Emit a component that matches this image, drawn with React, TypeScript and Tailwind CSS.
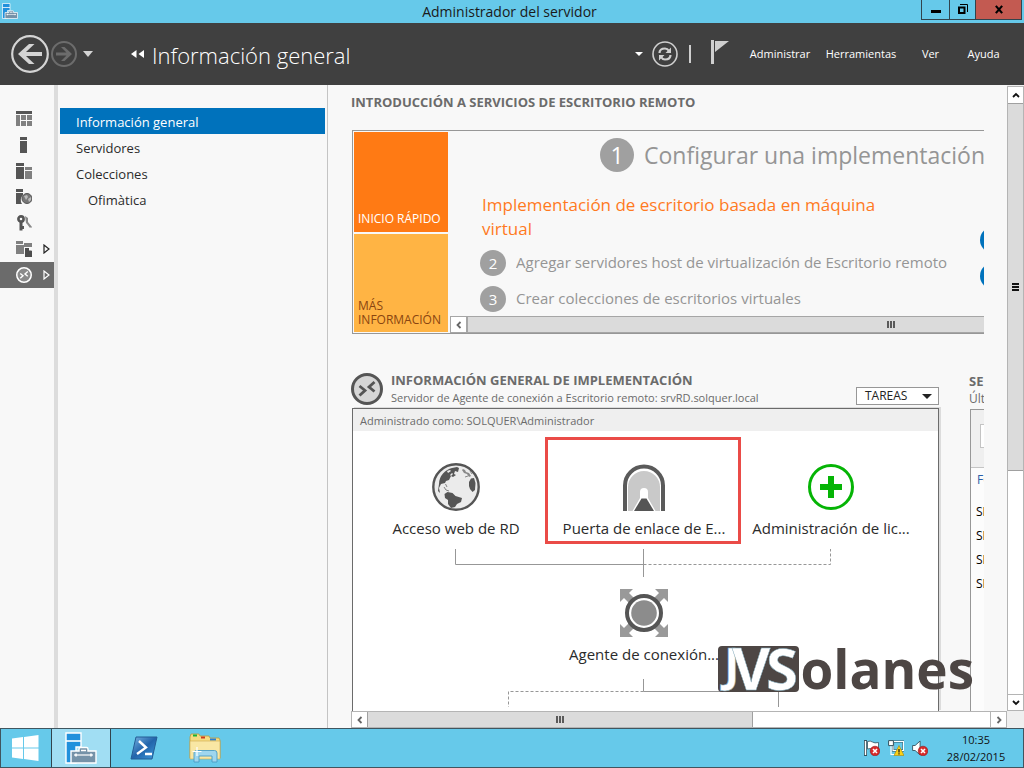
import type { ReactNode } from "react";
import clsx from "clsx";

type IconProps = { className?: string };

function ServerManagerIcon({ className }: IconProps) {
    return (
        <svg viewBox="0 0 32 32" className={className} aria-hidden="true">
            <path d="M1 1h15v14h-5v16H1z" fill="#2090dc" stroke="#fff" strokeWidth="1.4" />
            <path d="M1 9h15" stroke="#fff" strokeWidth="1.6" />
            <path
                d="M6 19h8v-2q0-1.5 1.500-1.500h6q1.500 0 1.500 1.500v2h8v12H6z"
                fill="#7592a8"
                stroke="#fff"
                strokeWidth="1.4"
            />
            <path d="M9 23h19" stroke="#fff" strokeWidth="1.2" />
            <path d="M11 21.500v3M26 21.500v3M16 18.500h5" stroke="#fff" strokeWidth="1.6" />
        </svg>
    );
}

function RemoteIcon({ className, fill, ring, mark }: IconProps & { fill: string; ring: string; mark: string }) {
    return (
        <svg viewBox="0 0 32 32" className={className} aria-hidden="true">
            <circle cx="16" cy="16" r="14.500" fill={fill} stroke={ring} strokeWidth="3" />
            <path d="M8.500 13l5.500 4.500-5.500 5" fill="none" stroke={mark} strokeWidth="2.800" />
            <path d="M23.500 9l-5.500 5 5.500 4.500" fill="none" stroke={mark} strokeWidth="2.800" />
        </svg>
    );
}

function Chevron({ d, className }: IconProps & { d: string }) {
    return (
        <svg viewBox="0 0 10 10" className={clsx("h-[10px] w-[10px]", className)} aria-hidden="true">
            <path d={d} fill="none" stroke="currentColor" strokeWidth="1.800" />
        </svg>
    );
}

const railIcons: { label: string; icon: ReactNode; arrow?: boolean; active?: boolean }[] = [
    {
        label: "Panel",
        icon: (
            <>
                <path d="M0 0h16v3H0z" fill="#555" />
                <path d="M0 4h4v11H0zM5 4h5v5H5zM11 4h5v5h-5zM5 10h5v5H5zM11 10h5v5h-5z" fill="#808080" />
            </>
        ),
    },
    {
        label: "Servidor local",
        icon: <path d="M4 0h7v3H4zM4 4h7v12H4z" fill="#555" />,
    },
    {
        label: "Todos los servidores",
        icon: (
            <>
                <path d="M0 0h8v3H0zM0 4h8v12H0z" fill="#555" />
                <path d="M9 4h7v3H9zM9 8h7v8H9z" fill="#808080" />
            </>
        ),
    },
    {
        label: "Servicios de archivos",
        icon: (
            <>
                <path d="M0 0h7v3H0zM0 4h7v2q-4 4-1 9H0z" fill="#555" />
                <circle cx="11" cy="9.500" r="5" fill="#777" stroke="#555" />
                <path d="M8 7l3-1 1 2-2 3zM12 10l3-2v3l-2 2z" fill="#bbb" />
            </>
        ),
    },
    {
        label: "Acceso",
        icon: (
            <>
                <circle cx="5" cy="4" r="2.600" fill="none" stroke="#555" strokeWidth="2.600" />
                <path d="M3.500 7h3v8.500h-3zM6 11h2v3H6z" fill="#555" />
                <path d="M9 1l3 2v4l4 5-1 1-5-5zM11 9l3 1v3z" fill="#888" />
            </>
        ),
    },
    {
        label: "Archivos y almacenamiento",
        arrow: true,
        icon: (
            <>
                <path d="M0 0h7v3H0zM0 4h8v9H0zM8 2h8v4H8z" fill="#808080" />
                <path d="M9 7h4l3 3v6H9z" fill="#4d4d4d" />
                <path d="M13 6l3 3.500h-3z" fill="#fff" />
            </>
        ),
    },
    { label: "Servicios de Escritorio remoto", arrow: true, active: true, icon: null },
];

const navItems = [
    { label: "Información general", active: true },
    { label: "Servidores" },
    { label: "Colecciones" },
    { label: "Ofimàtica", nested: true },
];

function TitleBar() {
    return (
        <header className="flex h-[23px] shrink-0 items-start bg-[#66c9ea]">
            <ServerManagerIcon className="ml-[2px] mt-[3px] h-4 w-4" />
            <h1 className="flex-1 pl-20 text-center text-[14px] leading-[23px] text-[#1a1a1a]">
                Administrador del servidor
            </h1>
            <div className="mr-[2px] flex h-5 border border-t-0 border-[#31444d] text-black">
                <button aria-label="Minimizar" className="flex w-[27px] items-end justify-center pb-[6px]">
                    <span className="h-[3px] w-[10px] bg-black" />
                </button>
                <button
                    aria-label="Restaurar"
                    className="flex w-[27px] items-center justify-center border-x border-[#31444d] pb-[2px]"
                >
                    <svg viewBox="0 0 10 10" className="h-[10px] w-[10px]" aria-hidden="true">
                        <path d="M1 3.500h5.500V9H1z" fill="none" stroke="#000" strokeWidth="2" />
                        <path d="M2 .5h7.500V8" fill="none" stroke="#000" />
                    </svg>
                </button>
                <button
                    aria-label="Cerrar"
                    className="flex w-[45px] items-center justify-center bg-[#c35a51] pb-px"
                >
                    <svg viewBox="0 0 10 10" className="h-[9px] w-[10px]" aria-hidden="true">
                        <path d="M1.500 1l7 8M8.500 1l-7 8" stroke="#000" strokeWidth="2.400" />
                    </svg>
                </button>
            </div>
        </header>
    );
}

function Toolbar() {
    return (
        <div className="flex h-[62px] shrink-0 items-center bg-[#404040] pl-[11px] pr-[23px] text-white">
            <button aria-label="Atrás">
                <svg viewBox="0 0 38 38" className="h-[38px] w-[38px]" aria-hidden="true">
                    <circle cx="19" cy="19" r="17.800" fill="none" stroke="#d4d4d4" strokeWidth="2.200" />
                    <path d="M7 19L18 9h5.500l-8.500 8h16v4H15l8.500 8H18z" fill="#d4d4d4" />
                </svg>
            </button>
            <button aria-label="Adelante" className="ml-[2px]">
                <svg viewBox="0 0 26 26" className="h-[26px] w-[26px]" aria-hidden="true">
                    <circle cx="13" cy="13" r="12" fill="none" stroke="#6c6c6c" strokeWidth="2" />
                    <path d="M21 13l-7.500-7H10l5.500 5.500H5v3h10.500L10 20h3.500z" fill="#6c6c6c" />
                </svg>
            </button>
            <button aria-label="Historial" className="ml-[6px]">
                <svg viewBox="0 0 10 6" className="h-[6px] w-[10px]" aria-hidden="true">
                    <path d="M0 0h10L5 6z" fill="#d4d4d4" />
                </svg>
            </button>
            <svg viewBox="0 0 14 8" className="ml-[38px] h-2 w-[14px]" aria-hidden="true">
                <path d="M5.500 0v8L0 4zM13 0v8L7.500 4z" fill="#fff" />
            </svg>
            <h2 className="ml-[7px] flex-1 whitespace-nowrap pt-[2px] text-[22px] font-light leading-8">
                Información general
            </h2>
            <button aria-label="Más" className="ml-2">
                <svg viewBox="0 0 8 4" className="h-1 w-2" aria-hidden="true">
                    <path d="M0 0h8L4 4z" fill="#fff" />
                </svg>
            </button>
            <button aria-label="Actualizar" className="ml-[9px]">
                <svg viewBox="0 0 26 26" className="h-[26px] w-[26px]" aria-hidden="true">
                    <circle cx="13" cy="13" r="12" fill="none" stroke="#cfcfcf" strokeWidth="1.600" />
                    <path
                        d="M7.500 12q0-4.500 5.500-4.500 2.500 0 4 2.500M18.500 14q0 4.500-5.500 4.500-2.500 0-4-2.500"
                        fill="none"
                        stroke="#cfcfcf"
                        strokeWidth="2.200"
                    />
                    <path d="M19 6.500V12h-5.500zM7 19.500V14h5.500z" fill="#cfcfcf" />
                </svg>
            </button>
            <span className="ml-[11px] h-[18px] w-[2px] bg-[#cfcfcf]" />
            <button aria-label="Notificaciones" className="ml-5 pb-1">
                <svg viewBox="0 0 18 24" className="h-6 w-[18px]" aria-hidden="true">
                    <path d="M0 0h3v24H0zM4 1h14L4 12z" fill="#cfcfcf" />
                </svg>
            </button>
            <nav className="flex items-center pt-px text-[11px]">
                <button className="ml-5 w-[62px] whitespace-nowrap">Administrar</button>
                <button className="ml-[14px] w-[72px] whitespace-nowrap">Herramientas</button>
                <button className="ml-6 w-[19px] whitespace-nowrap">Ver</button>
                <button className="ml-[26px] w-[35px] whitespace-nowrap">Ayuda</button>
            </nav>
        </div>
    );
}

function Rail() {
    return (
        <nav className="w-[54px] shrink-0 pt-[21px]">
            {railIcons.map((item) => (
                <a
                    key={item.label}
                    href="#"
                    aria-label={item.label}
                    className={clsx(
                        "flex h-[26px] items-center gap-[11px] pl-4",
                        item.active ? "bg-[#6b6b6b] text-white" : "text-[#222]",
                    )}
                >
                    {item.icon ? (
                        <svg viewBox="0 0 16 16" className="h-4 w-4" aria-hidden="true">
                            {item.icon}
                        </svg>
                    ) : (
                        <RemoteIcon className="h-4 w-4" fill="#8a8a8a" ring="#fff" mark="#fff" />
                    )}
                    {item.arrow && (
                        <svg viewBox="0 0 7 10" className="h-[10px] w-[7px]" aria-hidden="true">
                            <path d="M1 1v8l5-4z" fill="none" stroke="currentColor" strokeWidth="1.200" />
                        </svg>
                    )}
                </a>
            ))}
        </nav>
    );
}

function SideNav() {
    return (
        <nav className="w-[274px] shrink-0 border-l-4 border-r border-l-[#dcdcdc] border-r-[#c4c4c4] px-[2px] pt-[23px] text-[13px] text-[#2b2b2b]">
            {navItems.map((item) => (
                <a
                    key={item.label}
                    href="#"
                    className={clsx(
                        "flex h-[26px] items-center pt-1",
                        item.nested ? "pl-7" : "pl-4",
                        item.active && "bg-[#0072bc] text-white",
                    )}
                >
                    {item.label}
                </a>
            ))}
        </nav>
    );
}

function Step({ n, blue, children }: { n: string; blue?: boolean; children?: ReactNode }) {
    return (
        <li className="flex h-[26px] items-center gap-[10px]">
            <span
                className={clsx(
                    "flex h-[26px] w-[26px] shrink-0 items-center justify-center rounded-full text-white",
                    blue ? "bg-[#0072bc]" : "bg-[#a0a0a0]",
                )}
            >
                {n}
            </span>
            <span className="overflow-hidden whitespace-nowrap pb-[2px]">{children}</span>
        </li>
    );
}

function Intro() {
    return (
        <section>
            <h3 className="whitespace-nowrap text-[13px] font-bold leading-4 text-[#6b6b6b]">
                INTRODUCCIÓN A SERVICIOS DE ESCRITORIO REMOTO
            </h3>
            <div className="ml-px mt-5 flex h-[204px] border border-r-0 border-[#979797]">
                <div className="flex w-[96px] shrink-0 flex-col gap-[2px] p-px text-[12px] leading-[14px]">
                    <button className="flex flex-1 items-end bg-[#ff7a14] px-1 pb-[6px] text-left text-white">
                        INICIO RÁPIDO
                    </button>
                    <button className="flex flex-1 items-end bg-[#ffb444] px-1 pb-[5px] text-left text-[#8a4510]">
                        MÁS INFORMACIÓN
                    </button>
                </div>
                <div className="flex min-w-0 flex-1 flex-col justify-between overflow-hidden pl-px">
                    <div className="flex">
                        <div className="w-[530px] shrink-0 pl-[30px] pt-[7px] text-[#959595]">
                            <div className="flex h-[34px] items-center gap-[10px] pl-[120px] text-[23px]">
                                <span className="flex h-[34px] w-[34px] shrink-0 items-center justify-center rounded-full bg-[#a0a0a0] text-white">
                                    1
                                </span>
                                <span className="whitespace-nowrap">Configurar una implementación</span>
                            </div>
                            <h4 className="mt-[21px] w-[420px] pl-[2px] text-[17px] leading-6 text-[#ff7a1e]">
                                Implementación de escritorio basada en máquina virtual
                            </h4>
                            <ol className="mt-[9px] flex w-[471px] flex-col gap-[10px] text-[15px]">
                                <Step n="2">Agregar servidores host de virtualización de Escritorio remoto</Step>
                                <Step n="3">Crear colecciones de escritorios virtuales</Step>
                            </ol>
                        </div>
                        <ol className="flex shrink-0 flex-col gap-[10px] pt-24 text-[15px]">
                            <Step n="" blue />
                            <Step n="" blue />
                        </ol>
                    </div>
                    <div className="flex h-[17px] shrink-0 border border-r-0 border-[#a6a6a6] text-[#666]">
                        <button
                            aria-label="Desplazar a la izquierda"
                            className="flex w-[15px] items-center justify-center bg-white"
                        >
                            <Chevron d="M6.500 2l-3 3 3 3" />
                        </button>
                        <div className="flex flex-1 items-center justify-end gap-px border-l-2 border-[#a6a6a6] bg-[#dbdbdb] pr-[89px]">
                            <Grip />
                        </div>
                    </div>
                </div>
            </div>
        </section>
    );
}

function Grip() {
    return (
        <>
            <span className="h-[7px] w-[2px] bg-[#5a5a5a]" />
            <span className="h-[7px] w-[2px] bg-[#5a5a5a]" />
            <span className="h-[7px] w-[2px] bg-[#5a5a5a]" />
        </>
    );
}

function WebAccessIcon() {
    return (
        <svg viewBox="0 0 48 48" className="h-12 w-12" aria-hidden="true">
            <circle cx="24" cy="24" r="22.700" fill="#ebebeb" stroke="#555" strokeWidth="2.400" />
            <path
                d="M7 21q0-6 4-10.500Q15 6 20 5l5-1 2 1-1 4-3-1-1 3 2 1-3 2-2-1-2 4-3 1-1 2-4 1-2 4 1 5-2-2z"
                fill="#555"
            />
            <path d="M12 24l2 3 3 1M13.500 21l1.500 3" fill="none" stroke="#777" strokeWidth=".9" />
            <path d="M15 8l3-1 1 1-3 2zM18 12l2-2 1 1-2 2z" fill="#ebebeb" />
            <path d="M12.500 31l3-2 5 1 3 3 6.500 2-1 4-4 2-2 3-4 1-3-4v-4l-3-2z" fill="#555" />
            <path d="M37 19l2-3.500 3-.5 1.500 5-.5 7-2.500 2-2.500-3-1-3z" fill="#555" />
            <path d="M31 6l2 1 1 2 3 1 2 3-2 1-2-3-3-1-2-3z" fill="#888" />
            <path d="M33 14l3-1M38 8l2 3" stroke="#888" />
        </svg>
    );
}

function GatewayIcon() {
    return (
        <svg viewBox="0 0 48 48" className="h-12 w-12" aria-hidden="true">
            <path d="M5 48V22.500a19 19 0 0 1 38 0V48" fill="none" stroke="#5a5a5a" strokeWidth="4" />
            <path d="M8 48V24a16 16 0 0 1 32 0v24z" fill="#c9c9c9" />
            <path d="M12.500 48L20 35v-6a4 4 0 0 1 8 0v6l7.500 13z" fill="#fff" />
            <path d="M14 48l7.500-12.500h5L34 48z" fill="#555" />
        </svg>
    );
}

function LicenseIcon() {
    return (
        <svg viewBox="0 0 48 48" className="h-12 w-12" aria-hidden="true">
            <circle cx="24" cy="24" r="21.500" fill="#fff" stroke="#05b405" strokeWidth="3" />
            <path d="M13 21h8v-8h6v8h8v6h-8v8h-6v-8h-8z" fill="#05b405" />
        </svg>
    );
}

function BrokerIcon() {
    return (
        <svg viewBox="0 0 48 48" className="h-12 w-12" aria-hidden="true">
            <path d="M0 0h13L9 4l8 8-5 5-8-8-4 4z" fill="#999" />
            <path d="M48 0H35l4 4-8 8 5 5 8-8 4 4z" fill="#999" />
            <path d="M0 48h13l-4-4 8-8-5-5-8 8-4-4z" fill="#999" />
            <path d="M48 48H35l4-4-8-8 5-5 8 8 4-4z" fill="#999" />
            <circle cx="24" cy="24" r="17" fill="#fff" stroke="#555" strokeWidth="4" />
            <circle cx="24" cy="24" r="12.800" fill="#8c8c8c" />
        </svg>
    );
}

const nodes = [
    { label: "Acceso web de RD", icon: <WebAccessIcon />, place: "left-[3px] top-8" },
    { label: "Puerta de enlace de E...", icon: <GatewayIcon />, place: "left-[191px] top-8" },
    { label: "Administración de lic...", icon: <LicenseIcon />, place: "left-[378px] top-8" },
    { label: "Agente de conexión...", icon: <BrokerIcon />, place: "left-[191px] top-[158px]" },
];

function Diagram() {
    return (
        <div className="relative flex-1 overflow-hidden bg-white text-[15px] text-[#2b2b2b]">
            <svg className="absolute left-0 top-0 h-[280px] w-[586px]" viewBox="0 0 586 280" aria-hidden="true">
                <path
                    d="M102.500 118v15.500h188M290.500 118v28M290.500 248v12.500h135V276"
                    fill="none"
                    stroke="#979797"
                />
                <path
                    d="M290.500 133.500h187V118M290.500 260.500h-135V276"
                    fill="none"
                    stroke="#979797"
                    strokeDasharray="3 2"
                />
            </svg>
            {nodes.map((node) => (
                <div key={node.label} className={clsx("absolute flex w-[200px] flex-col items-center", node.place)}>
                    {node.icon}
                    <span className="mt-[5px] whitespace-nowrap leading-6">{node.label}</span>
                </div>
            ))}
            <div className="absolute left-[192px] top-[6px] h-[107px] w-[196px] border-3 border-[#ea4b47]" />
        </div>
    );
}

function Deployment() {
    return (
        <section className="flex w-[588px] shrink-0 flex-col">
            <div className="flex h-[35px] items-start gap-2">
                <RemoteIcon className="h-8 w-8 shrink-0" fill="#d6d6d6" ring="#555" mark="#555" />
                <div className="flex-1 whitespace-nowrap text-[#6b6b6b]">
                    <h3 className="text-[13px] font-bold leading-[14px]">INFORMACIÓN GENERAL DE IMPLEMENTACIÓN</h3>
                    <p className="text-[11px] leading-[22px]">
                        Servidor de Agente de conexión a Escritorio remoto: srvRD.solquer.local
                    </p>
                </div>
                <button className="mt-[14px] flex h-[18px] w-[83px] items-center justify-between border border-[#979797] bg-white pl-2 pr-[6px] text-[12px] text-[#222]">
                    TAREAS
                    <svg viewBox="0 0 10 5" className="h-[5px] w-[10px]" aria-hidden="true">
                        <path d="M0 0h10L5 5z" fill="#222" />
                    </svg>
                </button>
            </div>
            <div className="ml-px flex flex-1 flex-col border border-b-0 border-[#6b6b6b] shadow-[2px_-1px_0_#dcdcdc]">
                <p className="h-[22px] bg-[#efefef] pl-[7px] text-[11px] leading-6 text-[#6b6b6b]">
                    Administrado como: SOLQUER\Administrador
                </p>
                <Diagram />
            </div>
        </section>
    );
}

function ServerList() {
    return (
        <section className="flex w-[300px] shrink-0 flex-col text-[12px]">
            <div className="h-9 whitespace-nowrap text-[#6b6b6b]">
                <h3 className="text-[13px] font-bold leading-[17px]">SE</h3>
                <p className="leading-[18px]">Últ</p>
            </div>
            <div className="ml-px flex-1 border-l border-t border-[#979797] bg-[#fcfcfc]">
                <div className="h-[58px] border-b border-[#c4c4c4] bg-[#efefef] pl-[9px] pt-[14px]">
                    <input
                        aria-label="Filtro"
                        className="h-6 w-[160px] border border-[#c4c4c4] bg-white outline-none"
                    />
                </div>
                <table className="w-full text-left text-black">
                    <thead>
                        <tr className="h-8 text-[#2b5fa8]">
                            <th className="pb-2 pl-[6px] font-normal">FQ</th>
                        </tr>
                    </thead>
                    <tbody>
                        {["a", "b", "c", "d"].map((row) => (
                            <tr key={row} className="h-6">
                                <td className="pl-[5px]">SE</td>
                            </tr>
                        ))}
                    </tbody>
                </table>
            </div>
        </section>
    );
}

function Main() {
    return (
        <main className="flex min-w-0 flex-1">
            <div className="flex min-w-0 flex-1 flex-col">
                <div className="mx-[23px] flex min-h-0 flex-1 flex-col overflow-hidden pt-[9px]">
                    <Intro />
                    <div className="mt-[39px] flex flex-1 gap-[30px]">
                        <Deployment />
                        <ServerList />
                    </div>
                </div>
                <div className="ml-[23px] flex h-[17px] shrink-0 border border-[#b4b4b4] bg-white text-[#666]">
                    <button aria-label="Desplazar a la izquierda" className="flex w-[15px] items-center justify-center">
                        <Chevron d="M6.500 2l-3 3 3 3" />
                    </button>
                    <div className="flex w-[59%] items-center justify-center gap-px border border-y-0 border-[#a0a0a0] bg-[#dbdbdb]">
                        <Grip />
                    </div>
                    <button
                        aria-label="Desplazar a la derecha"
                        className="ml-auto flex w-4 items-center justify-center border-l border-[#b4b4b4]"
                    >
                        <Chevron d="M3.500 2l3 3-3 3" />
                    </button>
                </div>
            </div>
            <div className="flex w-[17px] shrink-0 flex-col bg-[#efefef] pb-[17px] pt-px text-[#111]">
                <div className="flex flex-1 flex-col border border-[#b4b4b4] bg-white">
                    <button aria-label="Desplazar hacia arriba" className="flex h-4 items-center justify-center">
                        <Chevron d="M2 7l3-3 3 3" />
                    </button>
                    <div className="flex h-[59%] flex-col items-center justify-center gap-px border-y border-[#a0a0a0] bg-[#dbdbdb]">
                        <span className="h-[2px] w-[7px] bg-[#111]" />
                        <span className="h-[2px] w-[7px] bg-[#111]" />
                        <span className="h-[2px] w-[7px] bg-[#111]" />
                    </div>
                    <button
                        aria-label="Desplazar hacia abajo"
                        className="mt-auto flex h-4 items-center justify-center border-t border-[#b4b4b4]"
                    >
                        <Chevron d="M2 3l3 3 3-3" />
                    </button>
                </div>
            </div>
        </main>
    );
}

function Badge({ x, y }: { x: number; y: number }) {
    return (
        <g transform={`translate(${x} ${y})`}>
            <circle r="4.800" fill="#d92a2a" stroke="#8f1a1a" strokeWidth=".6" />
            <path d="M-2-2l4 4M2-2l-4 4" stroke="#fff" strokeWidth="1.600" />
        </g>
    );
}

function Taskbar() {
    return (
        <footer className="flex h-10 shrink-0 items-stretch border border-[#40555f] bg-[#66c9ea]">
            <button aria-label="Inicio" className="flex w-[50px] items-center justify-center pr-[2px]">
                <svg viewBox="0 0 28 28" className="h-7 w-7" aria-hidden="true">
                    <path
                        d="M1 4.500L12 3v10.500H1zM13 2.900L27.500 1v12.500H13zM1 14.500h11V25L1 23.500zM13 14.500h14.500V27L13 25.100z"
                        fill="#fff"
                    />
                </svg>
            </button>
            <button
                aria-label="Administrador del servidor"
                className="flex w-[60px] items-center justify-center border-x border-[#31444d] bg-[#a1def3]"
            >
                <ServerManagerIcon className="h-8 w-8" />
            </button>
            <button aria-label="PowerShell" className="flex w-[66px] items-center justify-center">
                <svg viewBox="0 0 28 24" className="h-6 w-7" aria-hidden="true">
                    <defs>
                        <linearGradient id="shell" x1="0" y1="0" x2="1" y2="1">
                            <stop offset="0" stopColor="#7db8e6" />
                            <stop offset=".5" stopColor="#2264ab" />
                            <stop offset="1" stopColor="#3f9bdc" />
                        </linearGradient>
                    </defs>
                    <path d="M6 1h21l-5 22H1z" fill="url(#shell)" stroke="#235c95" strokeLinejoin="round" />
                    <path d="M9 5l7 6.500L7 18M15 18h7" fill="none" stroke="#fff" strokeWidth="2.400" />
                </svg>
            </button>
            <button aria-label="Explorador de archivos" className="flex w-[58px] items-center justify-center pr-[2px]">
                <svg viewBox="0 0 32 30" className="h-[30px] w-8" aria-hidden="true">
                    <path d="M1 4l1-3h8l1 2h9l1 2h9l1 2v18H1z" fill="#f6dc82" stroke="#bf9a3a" strokeWidth=".8" />
                    <path d="M4 1.500h4v2H4z" fill="#16b53a" />
                    <path d="M12 3.500h4v2h-4z" fill="#cc3b1e" />
                    <path d="M21 5.500h6v2h-6z" fill="#2a7fd4" />
                    <path d="M1 8h30v18H1z" fill="#f9e7a4" stroke="#cfaa4a" strokeWidth=".6" />
                    <path
                        d="M5 29V20q0-2.500 2.500-2.500h18q2.500 0 2.500 2.500v9h-5v-6H10v6z"
                        fill="#9fd6ee"
                        stroke="#4a9cc4"
                        strokeWidth=".9"
                    />
                    <path d="M8 14v9M3.500 18.500h9" stroke="#fff" strokeWidth="1.200" />
                </svg>
            </button>
            <div className="ml-auto flex items-center gap-2">
                <svg viewBox="0 0 16 16" className="h-4 w-4" aria-hidden="true">
                    <path d="M1.500 0v16" stroke="#33525f" strokeWidth="3" />
                    <path d="M1.500 1v14" stroke="#fff" strokeWidth="1.400" />
                    <path d="M3.500 1.500q3-1 5 .5t6 .5v7q-3 .5-5.500-.5t-5.500 0z" fill="#fff" stroke="#33525f" strokeWidth=".8" />
                    <Badge x={11} y={11} />
                </svg>
                <svg viewBox="0 0 16 16" className="h-4 w-4" aria-hidden="true">
                    <path d="M5 1.500h10.500v9H5z" fill="#66c9ea" stroke="#33525f" strokeWidth="2.200" />
                    <path d="M5 1.500h10.500v9H5zM3 5v9.500h4" fill="none" stroke="#fff" strokeWidth="1.200" />
                    <path d="M.6.6h4.800v5H.6z" fill="#fff" stroke="#33525f" />
                    <path d="M11 5.500l5 10H6z" fill="#fcd116" stroke="#a8870a" strokeWidth=".6" />
                    <path d="M11 9v3.500M11 13.300v1.200" stroke="#222" strokeWidth="1.300" />
                </svg>
                <svg viewBox="0 0 16 16" className="h-4 w-4" aria-hidden="true">
                    <path d="M.6 5.500h2.500l5-4.500v14l-5-4.500H.6z" fill="#fff" stroke="#33525f" strokeWidth=".9" />
                    <Badge x={11} y={11} />
                </svg>
            </div>
            <div className="ml-[14px] mr-[13px] w-[68px] self-center whitespace-nowrap text-center text-[11px] leading-[17px] text-[#111]">
                <p>10:35</p>
                <p>28/02/2015</p>
            </div>
        </footer>
    );
}

function Watermark() {
    return (
        <div className="pointer-events-none absolute bottom-[76px] right-[50px] flex items-end gap-[2px] text-[#4d4644]">
            <svg viewBox="0 0 81 46" className="h-[46px] w-[81px]" aria-hidden="true">
                <rect width="81" height="46" rx="4" fill="#4d4644" />
                <g fill="#fff" stroke="#7fa8ba" strokeWidth=".5" fontWeight="700">
                    <text x="6" y="35" fontSize="47">
                        J
                    </text>
                    <text x="14" y="44" fontSize="59">
                        V
                    </text>
                    <text x="48" y="44" fontSize="58">
                        S
                    </text>
                </g>
            </svg>
            <span className="text-[53px] font-bold leading-[46px]">olanes</span>
        </div>
    );
}

export default function App() {
    return (
        <div className="relative flex h-screen flex-col overflow-hidden bg-[#f8f8f8] font-['Open_Sans','Noto_Sans',sans-serif]">
            <TitleBar />
            <Toolbar />
            <div className="flex min-h-0 flex-1">
                <Rail />
                <SideNav />
                <Main />
            </div>
            <Taskbar />
            <Watermark />
        </div>
    );
}
